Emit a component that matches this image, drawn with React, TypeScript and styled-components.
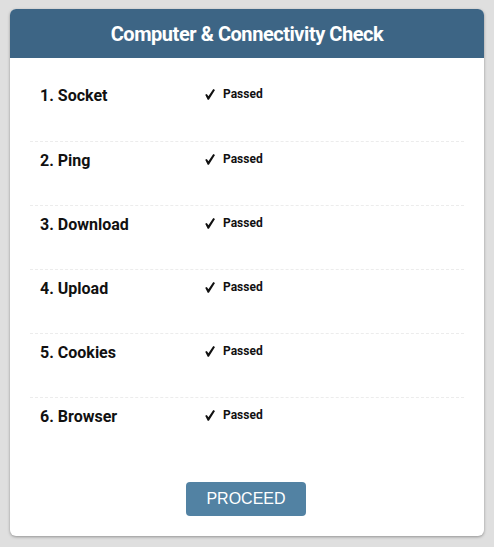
import styled, { createGlobalStyle } from 'styled-components';

const GlobalStyle = createGlobalStyle`
  html, body {
    margin: 0;
    padding: 0;
    background: #dfdfdf;
  }
  body {
    font-family: Roboto, "Liberation Sans", sans-serif;
  }
`;

const Page = styled.div`
  padding: 9px 10px 10px 10px;
`;

const Card = styled.div`
  width: 474px;
  background: #fff;
  border-radius: 6px;
  overflow: hidden;
  box-shadow: 0 1px 3px rgba(0, 0, 0, 0.35);
`;

const Header = styled.div`
  height: 49px;
  background: #3d6585;
  color: #fff;
  display: flex;
  align-items: center;
  justify-content: center;
  font-size: 20px;
  font-weight: 700;
  letter-spacing: -0.45px;
`;

const CheckList = styled.ul`
  list-style: none;
  margin: 0;
  padding: 19px 20px 0 20px;
`;

const Row = styled.li<{ first?: boolean }>`
  height: 64px;
  box-sizing: border-box;
  display: flex;
  align-items: flex-start;
  padding: 10px 0 0 10px;
  border-top: ${({ first }) => (first ? 'none' : '1px dashed #ececec')};
`;

const Label = styled.div`
  width: 165px;
  font-size: 16px;
  font-weight: 700;
  line-height: 18px;
  color: #111;
`;

const Status = styled.div`
  display: flex;
  align-items: center;
  font-size: 12px;
  font-weight: 700;
  line-height: 14px;
  color: #111;
`;

const Tick = styled.svg`
  width: 10px;
  height: 11px;
  margin-right: 8px;
  margin-top: 1px;
`;

const Footer = styled.div`
  display: flex;
  justify-content: center;
  padding: 21px 0 20px;
`;

const ProceedButton = styled.button`
  width: 120px;
  height: 34px;
  margin-left: -2px;
  border: none;
  border-radius: 4px;
  background: #5282a3;
  color: #fff;
  font-family: "Liberation Sans", Arial, sans-serif;
  font-size: 16px;
  cursor: pointer;
`;

const checks = ['Socket', 'Ping', 'Download', 'Upload', 'Cookies', 'Browser'];

const App = () => (
  <>
    <GlobalStyle />
    <Page>
      <Card>
        <Header>Computer &amp; Connectivity Check</Header>
        <CheckList>
          {checks.map((name, i) => (
            <Row key={name} first={i === 0}>
              <Label>{`${i + 1}. ${name}`}</Label>
              <Status>
                <Tick viewBox="0 0 10 11">
                  <path d="M0.2 5.8 L1.8 4.9 L3.4 7.3 L8.3 0.1 L10 1.1 L3.9 10.7 L2.7 10.7 Z" fill="#111" />
                </Tick>
                Passed
              </Status>
            </Row>
          ))}
        </CheckList>
        <Footer>
          <ProceedButton>PROCEED</ProceedButton>
        </Footer>
      </Card>
    </Page>
  </>
);

export default App;
